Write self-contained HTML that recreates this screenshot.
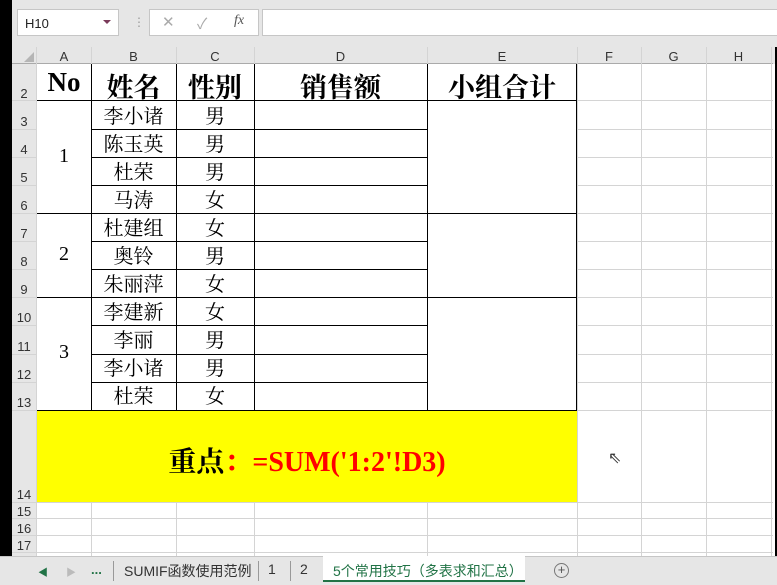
<!DOCTYPE html><html><head><meta charset="utf-8"><style>
body{margin:0;width:777px;height:585px;overflow:hidden;background:#fff;position:relative;font-family:"Liberation Sans","Noto Sans CJK SC",sans-serif}
div{position:absolute;box-sizing:border-box}
.h{background:#d4d4d4;height:1px}
.v{background:#d4d4d4;width:1px}
.bh{background:#000;height:1px}
.bv{background:#000;width:1px}
.ch{font-size:13px;color:#333;text-align:center;top:49px}
.rh{font-size:13px;color:#333;left:12px;width:24px;text-align:center}
.t{font-family:"Liberation Serif","Noto Serif CJK SC",serif;text-align:center;color:#000}
</style></head><body>
<div style="left:0;top:0;width:777px;height:47px;background:#e6e6e6"></div>
<div style="left:17px;top:9px;width:102px;height:27px;background:#fff;border:1px solid #c6c6c6;font-size:13px;padding:6px 0 0 7px;color:#222">H10</div>
<div style="left:103px;top:20px;width:0;height:0;border-left:4px solid transparent;border-right:4px solid transparent;border-top:4px solid #7a3a5a"></div>
<div style="left:133px;top:15px;font-size:12px;color:#999">⋮</div>
<div style="left:149px;top:9px;width:110px;height:27px;background:#fff;border:1px solid #c6c6c6;font-size:15px;color:#aaa"><span style="position:absolute;left:12px;top:3px">✕</span><span style="position:absolute;left:47px;top:3px">✓</span><span style="position:absolute;left:84px;top:3px;font-family:'Liberation Serif',serif;font-style:italic;color:#555;font-size:14px">fx</span></div>
<div style="left:262px;top:9px;width:515px;height:27px;background:#fff;border:1px solid #c6c6c6;border-right:none"></div>
<div style="left:0;top:47px;width:777px;height:17px;background:#e6e6e6"></div>
<div style="left:12px;top:64px;width:25px;height:492px;background:#e6e6e6"></div>
<div style="left:0;top:0;width:12px;height:585px;background:#000"></div>
<div style="left:775px;top:47px;width:2px;height:510px;background:#000"></div>
<div style="left:24px;top:52px;width:0;height:0;border-left:10px solid transparent;border-bottom:10px solid #b5b5b5"></div>
<div class="bh" style="left:12px;top:63px;width:761px;background:#aaa"></div>
<div class="ch" style="left:37px;width:54px">A</div><div class="ch" style="left:91px;width:85px">B</div><div class="ch" style="left:176px;width:78px">C</div><div class="ch" style="left:254px;width:173px">D</div><div class="ch" style="left:427px;width:150px">E</div><div class="ch" style="left:577px;width:64px">F</div><div class="ch" style="left:641px;width:65px">G</div><div class="ch" style="left:706px;width:65px">H</div>
<div class="h" style="left:12px;top:100px;width:761px"></div><div class="h" style="left:12px;top:129px;width:761px"></div><div class="h" style="left:12px;top:157px;width:761px"></div><div class="h" style="left:12px;top:185px;width:761px"></div><div class="h" style="left:12px;top:213px;width:761px"></div><div class="h" style="left:12px;top:241px;width:761px"></div><div class="h" style="left:12px;top:269px;width:761px"></div><div class="h" style="left:12px;top:297px;width:761px"></div><div class="h" style="left:12px;top:325px;width:761px"></div><div class="h" style="left:12px;top:354px;width:761px"></div><div class="h" style="left:12px;top:382px;width:761px"></div><div class="h" style="left:12px;top:410px;width:761px"></div><div class="h" style="left:12px;top:502px;width:761px"></div><div class="h" style="left:12px;top:518px;width:761px"></div><div class="h" style="left:12px;top:535px;width:761px"></div><div class="h" style="left:12px;top:552px;width:761px"></div>
<div class="v" style="left:36px;top:47px;height:509px"></div><div class="v" style="left:91px;top:47px;height:509px"></div><div class="v" style="left:176px;top:47px;height:509px"></div><div class="v" style="left:254px;top:47px;height:509px"></div><div class="v" style="left:427px;top:47px;height:509px"></div><div class="v" style="left:577px;top:47px;height:509px"></div><div class="v" style="left:641px;top:47px;height:509px"></div><div class="v" style="left:706px;top:47px;height:509px"></div><div class="v" style="left:771px;top:47px;height:509px"></div>
<div style="left:37px;top:101px;width:54px;height:112px;background:#fff"></div><div style="left:37px;top:214px;width:54px;height:83px;background:#fff"></div><div style="left:37px;top:298px;width:54px;height:112px;background:#fff"></div>
<div style="left:428px;top:101px;width:149px;height:112px;background:#fff"></div><div style="left:428px;top:214px;width:149px;height:83px;background:#fff"></div><div style="left:428px;top:298px;width:149px;height:112px;background:#fff"></div>
<div style="left:37px;top:411px;width:540px;height:91px;background:#ff0"></div>
<div class="bh" style="left:37px;top:100px;width:540px"></div>
<div class="bh" style="left:91px;top:129px;width:336px"></div><div class="bh" style="left:91px;top:157px;width:336px"></div><div class="bh" style="left:91px;top:185px;width:336px"></div>
<div class="bh" style="left:37px;top:213px;width:540px"></div>
<div class="bh" style="left:91px;top:241px;width:336px"></div><div class="bh" style="left:91px;top:269px;width:336px"></div>
<div class="bh" style="left:37px;top:297px;width:540px"></div>
<div class="bh" style="left:91px;top:325px;width:336px"></div><div class="bh" style="left:91px;top:354px;width:336px"></div><div class="bh" style="left:91px;top:382px;width:336px"></div>
<div class="bh" style="left:37px;top:410px;width:540px"></div>
<div class="bv" style="left:91px;top:64px;height:347px"></div><div class="bv" style="left:176px;top:64px;height:347px"></div><div class="bv" style="left:254px;top:64px;height:347px"></div><div class="bv" style="left:427px;top:64px;height:347px"></div><div class="bv" style="left:576px;top:64px;height:347px"></div>
<div class="rh" style="top:86px">2</div><div class="rh" style="top:114px">3</div><div class="rh" style="top:142px">4</div><div class="rh" style="top:170px">5</div><div class="rh" style="top:198px">6</div><div class="rh" style="top:226px">7</div><div class="rh" style="top:254px">8</div><div class="rh" style="top:282px">9</div><div class="rh" style="top:310px">10</div><div class="rh" style="top:339px">11</div><div class="rh" style="top:367px">12</div><div class="rh" style="top:395px">13</div><div class="rh" style="top:487px">14</div><div class="rh" style="top:504px">15</div><div class="rh" style="top:521px">16</div><div class="rh" style="top:538px">17</div>
<div class="t" style="left:37px;top:67px;width:54px;font-size:27px;font-weight:bold">No</div>
<div class="t" style="left:91px;top:66px;width:85px;font-size:27px;font-weight:bold">姓名</div>
<div class="t" style="left:176px;top:66px;width:78px;font-size:27px;font-weight:bold">性别</div>
<div class="t" style="left:254px;top:66px;width:173px;font-size:27px;font-weight:bold">销售额</div>
<div class="t" style="left:427px;top:66px;width:150px;font-size:27px;font-weight:bold">小组合计</div>
<div class="t" style="left:37px;top:145px;width:54px;font-size:20px">1</div>
<div class="t" style="left:37px;top:243px;width:54px;font-size:20px">2</div>
<div class="t" style="left:37px;top:341px;width:54px;font-size:20px">3</div>
<div class="t" style="left:91px;top:103px;width:85px;font-size:20px;line-height:28px">李小诸<br>陈玉英<br>杜荣<br>马涛<br>杜建组<br>奥铃<br>朱丽萍<br>李建新<br>李丽<br>李小诸<br>杜荣</div>
<div class="t" style="left:176px;top:103px;width:78px;font-size:20px;line-height:28px">男<br>男<br>男<br>女<br>女<br>男<br>女<br>女<br>男<br>男<br>女</div>
<div class="t" style="left:37px;top:440px;width:540px;font-size:28px;font-weight:bold">重点<span style="color:#f00">：=SUM('1:2'!D3)</span></div>
<div style="left:608px;top:448px;font-size:16px;color:#333">⇖</div>
<div style="left:0;top:556px;width:777px;height:29px;background:#e6e6e6;border-top:1px solid #c6c6c6"></div>
<div style="left:38px;top:564px;font-size:10px;color:#217346">◀</div><div style="left:66px;top:564px;font-size:10px;color:#bbb">▶</div>
<div style="left:91px;top:562px;font-size:13px;color:#217346;font-weight:bold">...</div>
<div class="v" style="left:113px;top:561px;height:20px;background:#999"></div>
<div style="left:124px;top:561px;font-size:14px;color:#333">SUMIF函数使用范例</div>
<div class="v" style="left:258px;top:561px;height:20px;background:#999"></div>
<div style="left:268px;top:561px;font-size:14px;color:#333">1</div>
<div class="v" style="left:290px;top:561px;height:20px;background:#999"></div>
<div style="left:300px;top:561px;font-size:14px;color:#333">2</div>
<div style="left:323px;top:556px;width:202px;height:26px;background:#fff;border-bottom:2px solid #217346"></div>
<div style="left:333px;top:561px;font-size:14px;color:#217346">5个常用技巧（多表求和汇总）</div>
<div style="left:554px;top:563px;width:15px;height:15px;border:1px solid #777;border-radius:50%;font-size:13px;line-height:12px;text-align:center;color:#555">+</div>
</body></html>
